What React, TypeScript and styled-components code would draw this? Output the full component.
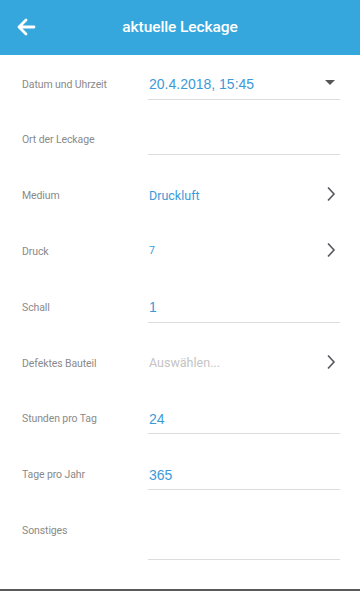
import { createGlobalStyle, styled } from "styled-components";

const GlobalStyle = createGlobalStyle`
  html, body {
    margin: 0;
    padding: 0;
    background: #ffffff;
  }
  * {
    box-sizing: border-box;
  }
`;

type Field = {
  label: string;
  value?: string;
  kind: "date" | "text" | "select" | "area";
  size?: "big" | "medium" | "small";
  placeholder?: boolean;
};

const fields: Field[] = [
  { label: "Datum und Uhrzeit", value: "20.4.2018, 15:45", kind: "date", size: "big" },
  { label: "Ort der Leckage", kind: "text" },
  { label: "Medium", value: "Druckluft", kind: "select", size: "medium" },
  { label: "Druck", value: "7", kind: "select", size: "small" },
  { label: "Schall", value: "1", kind: "text", size: "big" },
  { label: "Defektes Bauteil", value: "Auswählen...", kind: "select", size: "medium", placeholder: true },
  { label: "Stunden pro Tag", value: "24", kind: "text", size: "big" },
  { label: "Tage pro Jahr", value: "365", kind: "text", size: "big" },
  { label: "Sonstiges", kind: "area" },
];

const BackIcon = () => (
  <svg width="20" height="20" viewBox="0 0 20 20" fill="none">
    <path
      d="M18 10H3M10 3L3 10L10 17"
      stroke="#ffffff"
      strokeWidth="2.8"
      strokeLinecap="round"
      strokeLinejoin="round"
    />
  </svg>
);

const Chevron = () => (
  <svg width="10" height="16" viewBox="0 0 10 16" fill="none">
    <path d="M2 1.5L8 8L2 14.5" stroke="#55555f" strokeWidth="1.6" />
  </svg>
);

const Caret = () => (
  <svg width="10" height="5" viewBox="0 0 10 5">
    <path d="M0 0H10L5 5Z" fill="#555555" />
  </svg>
);

const App = () => {
  return (
    <Page>
      <GlobalStyle />
      <Header>
        <BackButton>
          <BackIcon />
        </BackButton>
        <Title>aktuelle Leckage</Title>
      </Header>

      <Form>
        {fields.map((f) => (
          <Row key={f.label}>
            <Label>{f.label}</Label>
            <Input kind={f.kind}>
              {f.value && (
                <Value size={f.size ?? "big"} placeholder={f.placeholder ? 1 : 0}>
                  {f.value}
                </Value>
              )}
              {f.kind === "date" && (
                <CaretBox>
                  <Caret />
                </CaretBox>
              )}
              {f.kind === "select" && (
                <ChevronBox>
                  <Chevron />
                </ChevronBox>
              )}
            </Input>
          </Row>
        ))}
      </Form>
    </Page>
  );
};

export default App;

const Page = styled.div`
  display: flex;
  flex-direction: column;
  height: 591px;
  border-bottom: 2px solid #595959;
  font-family: Roboto, "Liberation Sans", sans-serif;
`;

const Header = styled.header`
  display: flex;
  align-items: center;
  height: 55px;
  background: #35a7dd;
  padding: 0 16px;
`;

const BackButton = styled.div`
  display: flex;
  align-items: center;
  width: 22px;
  height: 22px;
  margin-top: -1px;
`;

const Title = styled.h1`
  flex: 1;
  margin: 0 22px 2px 0;
  text-align: center;
  color: #ffffff;
  font-size: 15.5px;
  font-weight: 500;
  letter-spacing: -0.1px;
`;

const Form = styled.div`
  display: flex;
  flex-direction: column;
`;

const Row = styled.div`
  display: grid;
  grid-template-columns: 126px 1fr;
  align-items: start;
  height: 55.83px;
  padding: 14.5px 20px 0 22px;
`;

const Label = styled.div`
  line-height: 30px;
  font-size: 10.5px;
  color: #8a8a8a;
  letter-spacing: -0.1px;
`;

const Input = styled.div<{ kind: Field["kind"] }>`
  display: flex;
  align-items: ${(p) => (p.kind === "area" ? "flex-start" : "center")};
  height: ${(p) => (p.kind === "area" ? "44px" : "30px")};
  ${(p) => (p.kind === "text" || p.kind === "date" || p.kind === "area") && "border-bottom: 1px solid #dcdcdc;"}
  padding-left: 1px;
`;

const Value = styled.span<{ size: "big" | "medium" | "small"; placeholder: number }>`
  flex: 1;
  color: ${(p) => (p.placeholder ? "#c4c4c4" : "#3d9ad8")};
  font-family: ${(p) =>
    p.size === "big" ? '"Liberation Sans", Arial, sans-serif' : 'Roboto, "Liberation Sans", sans-serif'};
  font-size: ${(p) => (p.size === "big" ? "14px" : p.size === "medium" ? "12.5px" : "10.5px")};
  margin-top: ${(p) => (p.size === "big" ? "0" : "-2px")};
`;

const CaretBox = styled.div`
  display: flex;
  margin-left: auto;
  margin-right: 5px;
  margin-top: -4px;
`;

const ChevronBox = styled.div`
  display: flex;
  margin-left: auto;
  margin-right: 4px;
  margin-top: -4px;
`;
